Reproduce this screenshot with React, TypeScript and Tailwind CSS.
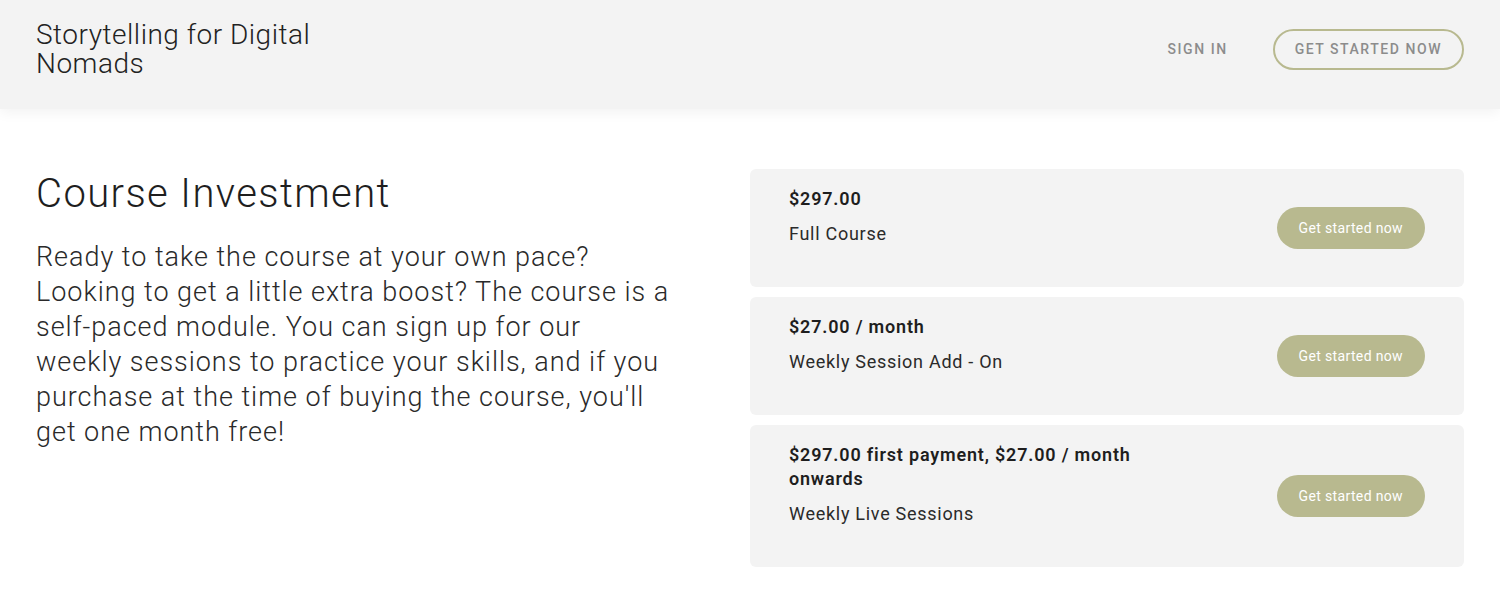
import React from "react";

interface Plan {
  price: string;
  name: string;
}

const plans: Plan[] = [
  { price: "$297.00", name: "Full Course" },
  { price: "$27.00 / month", name: "Weekly Session Add - On" },
  { price: "$297.00 first payment, $27.00 / month onwards", name: "Weekly Live Sessions" }
];

const PlanCard: React.FC<{ plan: Plan }> = ({ plan }) => (
  <div className="flex items-center justify-between rounded-md bg-[#f3f3f3] px-[39px]">
    <div className="w-[360px] pt-[18px] pb-[41px]">
      <div className="text-[18px] leading-[24px] font-semibold tracking-[0.045em] text-[#1e1e1e]">{plan.price}</div>
      <div className="mt-[11px] text-[18px] leading-[24px] tracking-[0.04em] text-[#2a2a2a]">{plan.name}</div>
    </div>
    <button className="rounded-full bg-[#b8b98f] px-[22px] py-[11px] text-[14px] leading-[20px] tracking-[0.025em] text-white">
      Get started now
    </button>
  </div>
);

export default function App() {
  return (
    <div className="min-h-[596px] bg-white font-['Roboto',sans-serif]">
      <header className="relative flex items-center justify-between bg-[#f3f3f3] px-9 pt-5 pb-[31px] shadow-[0_4px_12px_rgba(0,0,0,0.05)]">
        <div className="w-[300px] text-[28px] leading-[29px] font-light tracking-[0.018em] text-[#222]">
          Storytelling for Digital Nomads
        </div>
        <nav className="flex items-center gap-[45px]">
          <a className="text-[14px] font-medium tracking-[0.11em] text-[#8c8c8c]">SIGN IN</a>
          <button className="rounded-full border-2 border-[#b8b98f] px-5 py-[10px] text-[14px] leading-[17px] font-medium tracking-[0.11em] text-[#8c8c8c]">
            GET STARTED NOW
          </button>
        </nav>
      </header>

      <main className="grid grid-cols-2 px-9 pt-[60px] pb-8">
        <section className="pr-20">
          <h1 className="text-[40px] leading-[50px] font-light tracking-[0.035em] text-[#1e1e1e]">
            Course Investment
          </h1>
          <p className="mt-[21px] text-[27px] leading-[35px] font-light tracking-[0.036em] text-[#2a2a2a]">
            Ready to take the course at your own pace? Looking to get a little extra boost? The course is a
            self-paced module. You can sign up for our weekly sessions to practice your skills, and if you
            purchase at the time of buying the course, you'll get one month free!
          </p>
        </section>
        <section className="flex flex-col gap-[10px]">
          {plans.map((p) => (
            <PlanCard key={p.name} plan={p} />
          ))}
        </section>
      </main>
    </div>
  );
}
